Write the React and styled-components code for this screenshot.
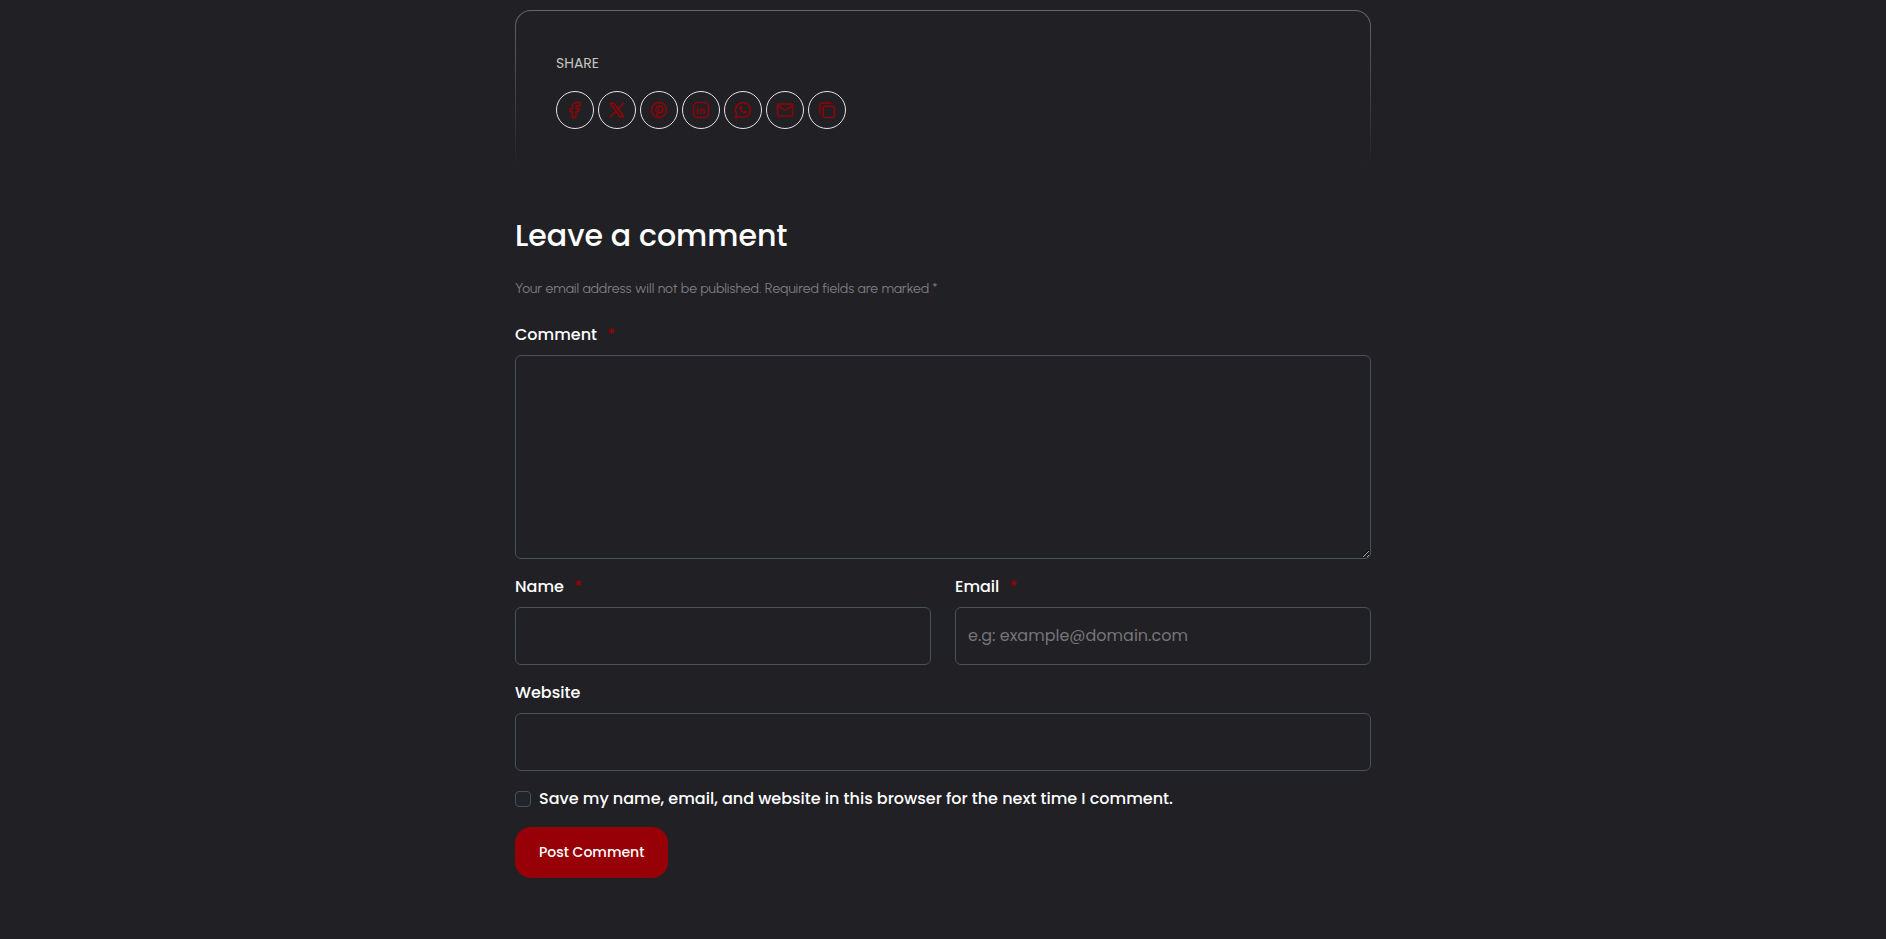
import styled, { createGlobalStyle } from 'styled-components';

const GlobalStyle = createGlobalStyle`
  * {
    box-sizing: border-box;
  }

  body {
    margin: 0;
    background: #212025;
    color: #fff;
    font-family: Poppins, Inter, sans-serif;
    font-size: 16px;
    line-height: 24px;
  }
`;

const Page = styled.main`
  max-width: 856px;
  margin: 0 auto;
  padding: 10px 0 60px;
`;

const ShareCard = styled.section`
  display: flex;
  flex-direction: column;
  gap: 16px;
  padding: 40px;
  border: 1px solid transparent;
  border-radius: 16px;
  background:
    linear-gradient(#212025, #212025) padding-box,
    linear-gradient(#66656a, #212025) border-box;
`;

const ShareTitle = styled.span`
  color: #c4c4c4;
  font-size: 14px;
`;

const ShareList = styled.div`
  display: flex;
  flex-wrap: wrap;
  gap: 4px;
`;

const ShareLink = styled.a`
  display: flex;
  justify-content: center;
  align-items: center;
  width: 38px;
  height: 38px;
  border: 1px solid #e4e4e4;
  border-radius: 50%;
  color: #960006;
`;

const Icon = styled.svg`
  width: 18px;
  height: 18px;
  fill: none;
  stroke: currentColor;
  stroke-width: 2;
  stroke-linecap: round;
  stroke-linejoin: round;
`;

const Title = styled.h2`
  margin: 45px 0 20px;
  font-size: 30px;
  font-weight: 500;
  line-height: 42px;
`;

const Note = styled.p`
  margin: 0 0 22px;
  color: #7d7d80;
  font-family: Urbanist, Inter, sans-serif;
  font-size: 14px;
  font-weight: 400;
`;

const Form = styled.form`
  display: flex;
  flex-direction: column;
  gap: 16px;
`;

const Row = styled.div`
  display: grid;
  grid-template-columns: 1fr 1fr;
  gap: 24px;
`;

const Field = styled.div`
  display: flex;
  flex-direction: column;
  gap: 8px;
`;

const Label = styled.label`
  font-weight: 500;
`;

const Required = styled.span`
  margin-left: 10px;
  color: #960006;
`;

const Input = styled.input`
  width: 100%;
  height: 58px;
  padding: 0 12px 2px;
  border: 1px solid #495057;
  border-radius: 6px;
  background: transparent;
  color: #fff;
  font: inherit;

  &::placeholder {
    color: #75757a;
  }
`;

const TextArea = styled.textarea`
  display: block;
  width: 100%;
  height: 204px;
  padding: 12px;
  border: 1px solid #495057;
  border-radius: 6px;
  background: transparent;
  color: #fff;
  font: inherit;
  resize: vertical;
`;

const CheckRow = styled.div`
  display: flex;
  align-items: center;
  gap: 8px;
`;

const Checkbox = styled.input`
  appearance: none;
  flex: none;
  width: 16px;
  height: 16px;
  margin: 0;
  border: 1px solid #495057;
  border-radius: 4px;
  background: #212529;

  &:checked {
    background: #960006;
  }
`;

const Submit = styled.button`
  align-self: flex-start;
  padding: 15px 24px 16px;
  border: 0;
  border-radius: 16px;
  background: #960006;
  color: #fff;
  font-family: inherit;
  font-size: 14px;
  font-weight: 500;
  line-height: 20px;
  cursor: pointer;
`;

const shareLinks = [
  {
    name: 'Facebook',
    icon: (
      <path d='M6.18 10.33C5.2 10.33 5 10.53 5 11.44v1.67c0 .92.2 1.11 1.18 1.11h2.37v6.67c0 .92.2 1.11 1.18 1.11h2.36c.98 0 1.18-.19 1.18-1.11v-6.67h2.66c.74 0 .93-.13 1.13-.8l.51-1.67c.35-1.15.13-1.42-1.14-1.42h-3.16V7.56c0-.62.53-1.12 1.18-1.12h3.37c.98 0 1.18-.19 1.18-1.11V3.11C19 2.19 18.8 2 17.82 2h-3.37c-3.26 0-5.9 2.49-5.9 5.56v2.77Z' />
    ),
  },
  {
    name: 'X',
    icon: <path d='m3 21 7.55-7.55M21 3l-7.55 7.55M8 3H3l13 18h5Z' />,
  },
  {
    name: 'Pinterest',
    icon: (
      <>
        <circle cx='12' cy='12' r='10' />
        <path d='m8.5 20.5 3.5-10M8.2 13.5c-1.5-3 .4-6.7 4.3-6.7 2.7 0 4.6 1.8 4.6 4.2 0 2.7-1.8 4.6-4 4.6-1.1 0-1.9-.4-2.4-1.2' />
      </>
    ),
  },
  {
    name: 'LinkedIn',
    icon: (
      <>
        <rect x='2' y='2' width='20' height='20' rx='5' />
        <path d='M7.5 11v5.5M12 11v5.5m0-3c0-3 4.5-3.4 4.5 0v3M7.5 7.3v.01' />
      </>
    ),
  },
  {
    name: 'WhatsApp',
    icon: (
      <>
        <path d='M12 22c5.52 0 10-4.48 10-10S17.52 2 12 2 2 6.48 2 12c0 1.38.28 2.69.79 3.88.28.66.42.99.44 1.24.02.25-.06.52-.2 1.07L2 22l3.81-1.03c.55-.14.82-.22 1.07-.2.25.02.58.16 1.24.44C9.31 21.72 10.62 22 12 22Z' />
        <path d='M8.6 9.6a.6.6 0 0 0 1.2 0V8.2a.6.6 0 0 0-1.2 0v1.4a5.8 5.8 0 0 0 5.8 5.8h1.4a.6.6 0 0 0 0-1.2h-1.4a.6.6 0 0 0 0 1.2' />
      </>
    ),
  },
  {
    name: 'Email',
    icon: (
      <>
        <rect x='2' y='4' width='20' height='16' rx='2' />
        <path d='m2.5 6 6.9 5.2c2 1.4 3.2 1.4 5.2 0L21.5 6' />
      </>
    ),
  },
  {
    name: 'Copy link',
    icon: (
      <>
        <rect x='7' y='7' width='15' height='15' rx='3' />
        <path d='M2.5 17V6c0-2.4 1.1-3.5 3.5-3.5h11' />
      </>
    ),
  },
];

function App() {
  return (
    <>
      <GlobalStyle />
      <Page>
        <ShareCard>
          <ShareTitle>SHARE</ShareTitle>
          <ShareList>
            {shareLinks.map(({ name, icon }) => (
              <ShareLink key={name} href='#' aria-label={name}>
                <Icon viewBox='0 0 24 24' overflow='visible'>
                  {icon}
                </Icon>
              </ShareLink>
            ))}
          </ShareList>
        </ShareCard>
        <Title>Leave a comment</Title>
        <Note>Your email address will not be published. Required fields are marked *</Note>
        <Form>
          <Field>
            <Label htmlFor='comment'>
              Comment<Required>*</Required>
            </Label>
            <TextArea id='comment' required />
          </Field>
          <Row>
            <Field>
              <Label htmlFor='name'>
                Name<Required>*</Required>
              </Label>
              <Input id='name' type='text' required />
            </Field>
            <Field>
              <Label htmlFor='email'>
                Email<Required>*</Required>
              </Label>
              <Input id='email' type='email' placeholder='e.g: example@domain.com' required />
            </Field>
          </Row>
          <Field>
            <Label htmlFor='website'>Website</Label>
            <Input id='website' type='url' />
          </Field>
          <CheckRow>
            <Checkbox id='save' type='checkbox' />
            <Label htmlFor='save'>
              Save my name, email, and website in this browser for the next time I comment.
            </Label>
          </CheckRow>
          <Submit type='submit'>Post Comment</Submit>
        </Form>
      </Page>
    </>
  );
}

export default App;
